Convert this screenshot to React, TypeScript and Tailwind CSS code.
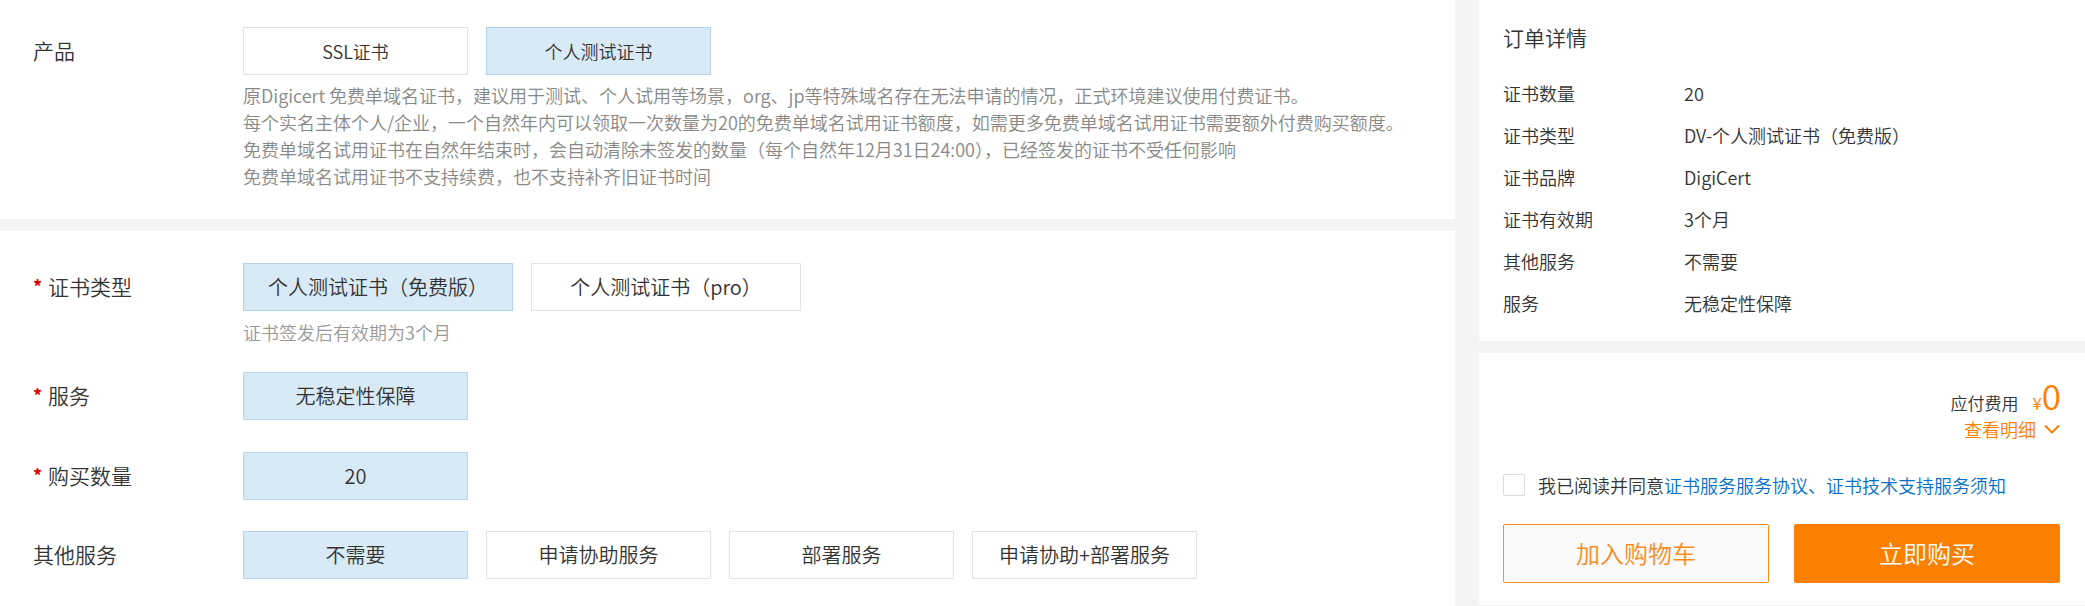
import { useState } from "react";

const font = { fontFamily: '"Noto Sans CJK SC", "Noto Sans", sans-serif' };

type OptProps = { label: string; active?: boolean; wide?: boolean; small?: boolean };

function Option({ label, active, wide, small }: OptProps) {
  return (
    <button
      className={
        "h-[48px] flex items-center justify-center border text-[#333] " +
        (wide ? "w-[270px] " : "w-[225px] ") +
        (small ? "text-[18px] " : "text-[20px] ") +
        (active ? "bg-[#d9eaf7] border-[#b4d3ef]" : "bg-white border-[#e3e3e3]")
      }
    >
      {label}
    </button>
  );
}

function Label({ text, required }: { text: string; required?: boolean }) {
  return (
    <div className="w-[210px] shrink-0 h-[48px] flex items-center text-[21px] text-[#333]">
      {required && <span className="text-[#e00000] text-[18px] font-bold w-[15px] -mt-[2px]">*</span>}
      {text}
    </div>
  );
}

const details: [string, string][] = [
  ["证书数量", "20"],
  ["证书类型", "DV-个人测试证书（免费版）"],
  ["证书品牌", "DigiCert"],
  ["证书有效期", "3个月"],
  ["其他服务", "不需要"],
  ["服务", "无稳定性保障"],
];

export default function App() {
  const [agreed, setAgreed] = useState(false);

  return (
    <div className="w-[2085px] h-[606px] bg-[#f4f4f4] flex overflow-hidden font-[350]" style={font}>
      {/* left: product config */}
      <div className="w-[1455px] shrink-0 flex flex-col gap-[12px]">
        <div className="bg-white h-[219px] shrink-0 pl-[33px] pt-[27px] flex">
          <Label text="产品" />
          <div className="flex flex-col">
            <div className="flex gap-[18px]">
              <Option label="SSL证书" small />
              <Option label="个人测试证书" small active />
            </div>
            <div className="mt-[7px] text-[18px] leading-[27px] text-[#888]">
              <p>原Digicert 免费单域名证书，建议用于测试、个人试用等场景，org、jp等特殊域名存在无法申请的情况，正式环境建议使用付费证书。</p>
              <p>每个实名主体个人/企业，一个自然年内可以领取一次数量为20的免费单域名试用证书额度，如需更多免费单域名试用证书需要额外付费购买额度。</p>
              <p>免费单域名试用证书在自然年结束时，会自动清除未签发的数量（每个自然年12月31日24:00），已经签发的证书不受任何影响</p>
              <p>免费单域名试用证书不支持续费，也不支持补齐旧证书时间</p>
            </div>
          </div>
        </div>

        <div className="bg-white flex-1 pl-[33px] pt-[32px] flex flex-col">
          <div className="flex">
            <Label text="证书类型" required />
            <div className="flex flex-col">
              <div className="flex gap-[18px]">
                <Option label="个人测试证书（免费版）" wide active />
                <Option label="个人测试证书（pro）" wide />
              </div>
              <p className="mt-[8px] text-[18px] leading-[27px] text-[#999]">证书签发后有效期为3个月</p>
            </div>
          </div>
          <div className="flex mt-[26px]">
            <Label text="服务" required />
            <Option label="无稳定性保障" active />
          </div>
          <div className="flex mt-[32px]">
            <Label text="购买数量" required />
            <Option label="20" active />
          </div>
          <div className="flex mt-[31px]">
            <Label text="其他服务" />
            <div className="flex gap-[18px]">
              <Option label="不需要" active />
              <Option label="申请协助服务" />
              <Option label="部署服务" />
              <Option label="申请协助+部署服务" />
            </div>
          </div>
        </div>
      </div>

      {/* right: order summary */}
      <div className="ml-[24px] flex-1 flex flex-col gap-[12px] pb-px">
        <div className="bg-white h-[341px] shrink-0 px-[24px] pt-[23px]">
          <h3 className="text-[21px] leading-[28px] text-[#333]">订单详情</h3>
          <div className="mt-[21px]">
            {details.map(([k, v]) => (
              <div key={k} className="flex h-[42px] items-center text-[18px] text-[#333]">
                <span className="w-[181px] shrink-0">{k}</span>
                <span>{v}</span>
              </div>
            ))}
          </div>
        </div>

        <div className="bg-white flex-1 px-[24px] pt-[24px]">
          <div className="flex justify-end items-baseline">
            <span className="text-[17px] text-[#333]">应付费用</span>
            <span className="ml-[14px] text-[17px] text-[#ff7d00]">¥</span>
            <span className="text-[35px] leading-[36px] text-[#ff7d00]">0</span>
          </div>
          <div className="flex justify-end items-center text-[18px] leading-[26px] text-[#ff7d00]">
            查看明细
            <svg className="ml-[7px] w-[18px] h-[18px]" viewBox="0 0 18 18" fill="none" stroke="currentColor" strokeWidth={2}>
              <path d="M2 5.5l7 7 7-7" />
            </svg>
          </div>
          <label className="flex items-center mt-[31px] text-[18px] leading-[24px]">
            <input
              type="checkbox"
              checked={agreed}
              onChange={(e) => setAgreed(e.target.checked)}
              className="appearance-none w-[22px] h-[22px] border border-[#dcdcdc] rounded-[2px] bg-white"
            />
            <span className="ml-[13px] text-[#333]">
              我已阅读并同意<span className="text-[#0070cc]">证书服务服务协议、证书技术支持服务须知</span>
            </span>
          </label>
          <div className="flex gap-[25px] mt-[27px]">
            <button className="w-[266px] h-[59px] rounded-[2px] border border-[#f98c1a] bg-[#fafafa] text-[24px] text-[#fb8a1e]">
              加入购物车
            </button>
            <button className="w-[266px] h-[59px] rounded-[2px] bg-[#fb8000] text-[24px] text-white">
              立即购买
            </button>
          </div>
        </div>
      </div>
    </div>
  );
}
